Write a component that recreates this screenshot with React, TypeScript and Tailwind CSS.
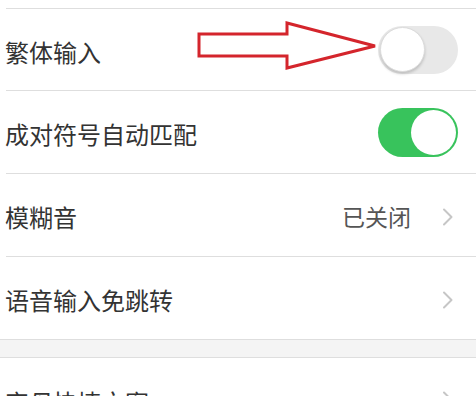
import React from 'react';

const font = { fontFamily: '"Noto Sans CJK SC", "Noto Sans", sans-serif' };

const Chevron = () => (
  <svg width="12" height="18" viewBox="0 0 12 18" className="shrink-0">
    <path d="M2 1.5 L9.5 9 L2 16.5" fill="none" stroke="#c6c6c6" strokeWidth="2" strokeLinecap="round" strokeLinejoin="round" />
  </svg>
);

const Toggle = ({ on }: { on: boolean }) =>
  on ? (
    <div className="flex h-[49px] w-[80px] items-center justify-end rounded-full bg-[#38c35c] p-[2px]">
      <div className="h-[45px] w-[45px] rounded-full bg-white" />
    </div>
  ) : (
    <div className="flex h-[48px] w-[80px] items-center rounded-full bg-[#e8e8e8] p-[2px]">
      <div className="h-[45px] w-[45px] rounded-full border border-[#dcdcdc] bg-white shadow-[0_2px_3px_rgba(0,0,0,0.18)]" />
    </div>
  );

const Label = ({ children }: { children: React.ReactNode }) => (
  <span className="-ml-px pt-[4px] text-[24px] leading-none text-[#333333]">{children}</span>
);

const Row = ({ label, children, first }: { label: string; children?: React.ReactNode; first?: boolean }) => (
  <div
    className={`ml-[6px] flex h-[83px] items-center justify-between border-b border-[#dedede] ${first ? 'border-t' : ''}`}
  >
    <Label>{label}</Label>
    {children}
  </div>
);

export default function App() {
  return (
    <div className="relative h-[396px] w-[476px] overflow-hidden bg-white" style={font}>
      <div className="h-[8px]" />
      <Row label="繁体输入" first>
        <div className="mr-[18px]">
          <Toggle on={false} />
        </div>
      </Row>
      <Row label="成对符号自动匹配">
        <div className="mr-[18px]">
          <Toggle on />
        </div>
      </Row>
      <Row label="模糊音">
        <div className="mr-[22px] flex items-center gap-[31px] pt-[3px]">
          <span className="text-[23px] leading-none text-[#555555]">已关闭</span>
          <Chevron />
        </div>
      </Row>
      <div className="ml-[6px] flex h-[82px] items-center justify-between">
        <Label>语音输入免跳转</Label>
        <div className="mr-[22px] pt-[3px]">
          <Chevron />
        </div>
      </div>
      <div className="h-[19px] border-y border-[#dedede] bg-[#f4f4f4]" />
      <div className="ml-[6px] flex h-[83px] items-center justify-between">
        <Label>字母快捷文案</Label>
        <div className="mr-[22px]">
          <Chevron />
        </div>
      </div>

      {/* annotation arrow */}
      <svg className="absolute left-[190px] top-[15px]" width="200" height="65" viewBox="0 0 200 65">
        <path d="M9 19 H97 V8 L185 31 L97 53 V41 H9 Z" fill="none" stroke="#d4252c" strokeWidth="3" strokeLinejoin="miter" />
      </svg>
    </div>
  );
}
